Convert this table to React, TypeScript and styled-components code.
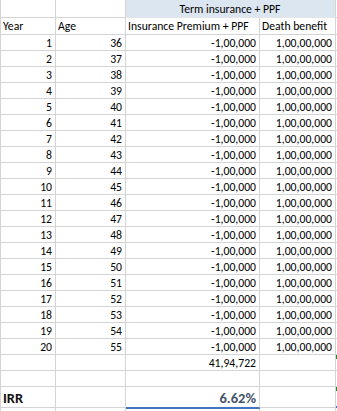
import React from "react";
import styled, { createGlobalStyle, css } from "styled-components";

const Global = createGlobalStyle`
  html, body { margin: 0; padding: 0; background: #ffffff; }
  body { font-family: Carlito, "Liberation Sans Narrow", "Liberation Sans", sans-serif; }
`;

const GRID = "#d4d4d4";

const Sheet = styled.div`
  display: grid;
  grid-template-columns: 56px 70px 134px 76px 1px;
  grid-template-rows: 18px 17px repeat(22, 16px) 21px 4px;
  width: 337px;
  height: 411px;
  overflow: hidden;
  font-size: 11.7px;
  color: #000;
  background: #fff;
`;

const Cell = styled.div<{ $align?: "left" | "right" | "center"; $first?: boolean }>`
  box-sizing: border-box;
  border-right: 1px solid ${GRID};
  border-bottom: 1px solid ${GRID};
  ${(p) => p.$first && css`border-left: 1px solid ${GRID};`}
  display: flex;
  align-items: center;
  justify-content: ${(p) =>
    p.$align === "right" ? "flex-end" : p.$align === "center" ? "center" : "flex-start"};
  padding: 2px 3px 0 2px;
  white-space: nowrap;
  line-height: 1;
  position: relative;
`;

const Band = styled(Cell)`
  grid-column: span 2;
  background: #dce6f1;
  border-bottom-color: #e6e6e6;
`;

const Heading = styled(Cell)``;

const IrrLabel = styled(Cell)`
  font-weight: bold;
  font-size: 14.5px;
  color: #111;
  align-items: flex-end;
  padding-bottom: 2px;
`;

const IrrValue = styled(Cell)`
  font-weight: bold;
  font-size: 14.5px;
  color: #44546a;
  align-items: flex-end;
  padding-bottom: 2px;
  border-bottom: 1px solid #4472c4;
  box-shadow: 0 1px 0 #4472c4;
  z-index: 1;
`;

const Edge = styled.div<{ $flag?: boolean; $blue?: boolean }>`
  position: relative;
  border-bottom: 1px solid ${GRID};
  box-sizing: border-box;
  ${(p) =>
    p.$flag &&
    css`
      &::before {
        content: "";
        position: absolute;
        left: 0;
        top: 0;
        width: 2px;
        height: 4px;
        background: #1e8a1e;
      }
    `}
  ${(p) =>
    p.$blue &&
    css`
      border-bottom: 2px solid #4472c4;
    `}
`;

const rows = Array.from({ length: 20 }, (_, i) => ({ year: i + 1, age: 36 + i }));

export default function App() {
  return (
    <>
      <Global />
      <Sheet>
        <Cell $first />
        <Cell />
        <Band $align="center">Term insurance + PPF</Band>
        <Edge />

        <Heading $first>Year</Heading>
        <Heading>Age</Heading>
        <Heading>Insurance Premium + PPF</Heading>
        <Heading>Death benefit</Heading>
        <Edge />

        {rows.map((r) => (
          <React.Fragment key={r.year}>
            <Cell $first $align="right">{r.year}</Cell>
            <Cell $align="right">{r.age}</Cell>
            <Cell $align="right">-1,00,000</Cell>
            <Cell $align="right">1,00,00,000</Cell>
            <Edge />
          </React.Fragment>
        ))}

        <Cell $first />
        <Cell />
        <Cell $align="right">41,94,722</Cell>
        <Cell />
        <Edge $flag />

        <Cell $first />
        <Cell />
        <Cell />
        <Cell />
        <Edge />

        <IrrLabel $first>IRR</IrrLabel>
        <Cell />
        <IrrValue $align="right">6.62%</IrrValue>
        <Cell />
        <Edge $flag $blue />

        <Cell $first />
        <Cell />
        <Cell />
        <Cell />
        <Edge />
      </Sheet>
    </>
  );
}
